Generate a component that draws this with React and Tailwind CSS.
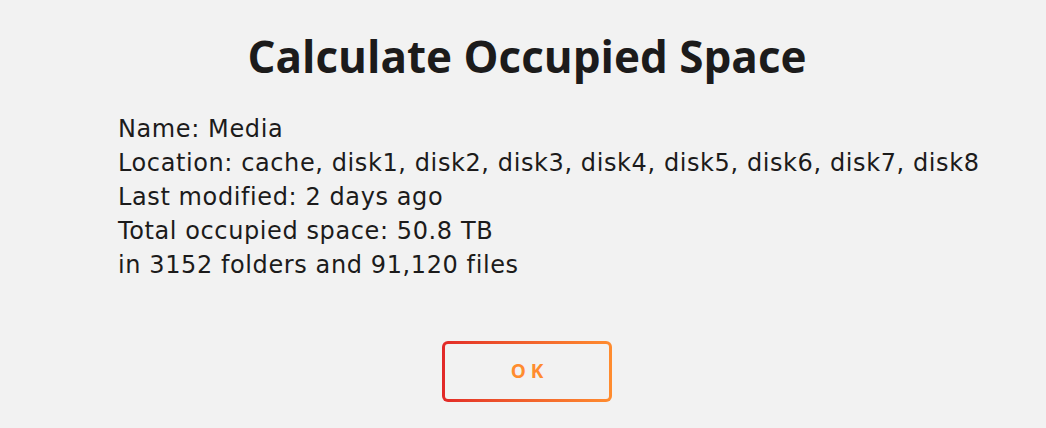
export default function App() {
  return (
    <div
      className="w-[1046px] h-[428px] bg-[#f2f2f2] text-[#1c1b1b] flex flex-col"
      style={{ fontFamily: '"Open Sans", "Noto Sans", sans-serif' }}
    >
      <h2 className="text-center text-[44px] font-bold leading-[52px] mt-[30px] ml-[8px]">
        Calculate Occupied Space
      </h2>
      <div
        className="pl-[118px] mt-[30px] text-[24px] leading-[34px] tracking-[0.6px]"
        style={{ fontFamily: '"DejaVu Sans", sans-serif' }}
      >
        <Line>Name: Media</Line>
        <Line>Location: cache, disk1, disk2, disk3, disk4, disk5, disk6, disk7, disk8</Line>
        <Line>Last modified: 2 days ago</Line>
        <Line>Total occupied space: 50.8 TB</Line>
        <Line>in 3152 folders and 91,120 files</Line>
      </div>
      <div className="flex justify-center mt-[59px] ml-[8px]">
        <button className="w-[170px] h-[61px] rounded-[6px] p-[3px] bg-gradient-to-r from-[#e22828] to-[#ff8c2f]">
          <span className="flex h-full w-full items-center justify-center rounded-[3px] bg-[#f2f2f2] text-[#ff8c2f] text-[19px] font-bold tracking-[5px] pl-[5px]">
            OK
          </span>
        </button>
      </div>
    </div>
  );
}

function Line({ children }) {
  return <div>{children}</div>;
}
